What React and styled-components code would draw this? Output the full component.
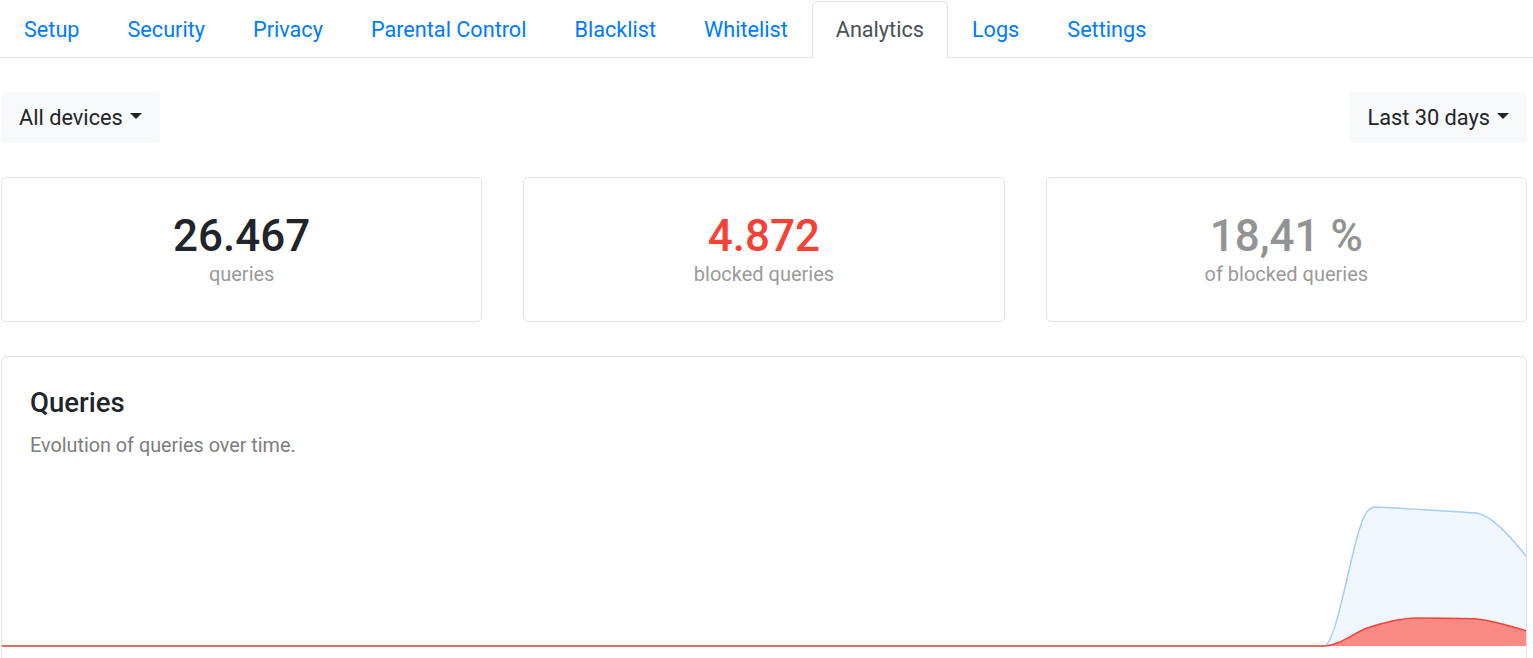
import React from "react";
import styled, { createGlobalStyle } from "styled-components";

const Global = createGlobalStyle`
  html, body { margin: 0; padding: 0; overflow: hidden; background: #fff; }
  body { font-family: Roboto, "Liberation Sans", Arial, sans-serif; color: #212529; }
  * { box-sizing: border-box; }
`;

const Page = styled.div`
  width: 1533px;
`;

const Nav = styled.nav`
  display: flex;
  padding-top: 1px;
  border-bottom: 1px solid #dee2e6;
`;

const Tab = styled.a`
  display: block;
  font-size: 21.65px;
  line-height: 33px;
  padding: 11px 23px;
  border: 1px solid ${(p) => (p.$active ? "#dee2e6" : "transparent")};
  border-bottom-color: ${(p) => (p.$active ? "#fff" : "transparent")};
  border-radius: 5px 5px 0 0;
  margin-bottom: -1px;
  background: ${(p) => (p.$active ? "#fff" : "transparent")};
  color: ${(p) => (p.$active ? "#495057" : "#007bff")};
  text-decoration: none;
  cursor: pointer;
`;

const Content = styled.main`
  padding: 0 6px 0 1px;
`;

const FilterRow = styled.div`
  display: flex;
  justify-content: space-between;
  margin-top: 34px;
`;

const Dropdown = styled.button`
  display: flex;
  align-items: center;
  gap: 7px;
  height: 51px;
  padding: 0 18px;
  border: none;
  border-radius: 5px;
  background: #f8f9fa;
  font-family: inherit;
  font-size: 21.75px;
  color: #212529;
  cursor: pointer;
`;

const Caret = styled.span`
  display: inline-block;
  width: 0;
  height: 0;
  margin-top: -3px;
  border-left: 6.5px solid transparent;
  border-right: 6.5px solid transparent;
  border-top: 6px solid #212529;
`;

const StatGrid = styled.div`
  display: grid;
  grid-template-columns: repeat(3, 1fr);
  gap: 41px;
  margin-top: 34px;
`;

const StatCard = styled.div`
  height: 145px;
  border: 1px solid #dee2e6;
  border-radius: 5px;
  padding-top: 33px;
  text-align: center;
`;

const StatValue = styled.div`
  font-size: 44px;
  font-weight: 500;
  line-height: 51px;
  color: ${(p) => p.$color};
`;

const StatLabel = styled.div`
  font-size: 20px;
  line-height: 24px;
  color: #9a9a9a;
`;

const ChartCard = styled.section`
  margin-top: 34px;
  border: 1px solid #dee2e6;
  border-radius: 5px;
  height: 320px;
`;

const ChartHeader = styled.header`
  padding: 29px 28px 0;
`;

const ChartTitle = styled.h2`
  margin: 0;
  font-size: 27.5px;
  font-weight: 500;
  line-height: 34px;
  color: #212529;
`;

const ChartSub = styled.p`
  margin: 11px 0 0;
  font-size: 19.8px;
  line-height: 30px;
  color: #7d7d7d;
`;

const ChartSvg = styled.svg`
  display: block;
  margin-top: 9px;
  width: 1524px;
  height: 188px;
`;

const tabs = ["Setup", "Security", "Privacy", "Parental Control", "Blacklist", "Whitelist", "Analytics", "Logs", "Settings"];

const stats = [
  { value: "26.467", label: "queries", color: "#212529" },
  { value: "4.872", label: "blocked queries", color: "#f44336" },
  { value: "18,41 %", label: "of blocked queries", color: "#939393" },
];

const bluePath =
  "M 2 646 L 1325 646 C 1335 640, 1345 585, 1355 545 C 1362 518, 1366 507, 1376 507 C 1400 508, 1440 511, 1476 513 C 1490 515, 1505 530, 1527 557";
const redPath =
  "M 2 646 L 1325 646 C 1340 645, 1352 634, 1367 628 C 1385 622, 1400 618, 1417 618 C 1440 618, 1460 618, 1477 619 C 1495 621, 1510 626, 1527 631";

export default function App() {
  return (
    <Page>
      <Global />
      <Nav>
        {tabs.map((t) => (
          <Tab key={t} $active={t === "Analytics"}>
            {t}
          </Tab>
        ))}
      </Nav>
      <Content>
        <FilterRow>
          <Dropdown>
            All devices <Caret />
          </Dropdown>
          <Dropdown>
            Last 30 days <Caret />
          </Dropdown>
        </FilterRow>
        <StatGrid>
          {stats.map((s) => (
            <StatCard key={s.label}>
              <StatValue $color={s.color}>{s.value}</StatValue>
              <StatLabel>{s.label}</StatLabel>
            </StatCard>
          ))}
        </StatGrid>
        <ChartCard>
          <ChartHeader>
            <ChartTitle>Queries</ChartTitle>
            <ChartSub>Evolution of queries over time.</ChartSub>
          </ChartHeader>
          <ChartSvg viewBox="2 470 1524 188" preserveAspectRatio="none">
            <path d={bluePath + " L 1527 646 Z"} fill="#f1f7fe" />
            <path d={bluePath} fill="none" stroke="#a3cefa" strokeWidth="1.5" />
            <path d={redPath + " L 1527 646 Z"} fill="#fa8a84" />
            <path d={redPath} fill="none" stroke="#f5443b" strokeWidth="1.5" />
          </ChartSvg>
        </ChartCard>
      </Content>
    </Page>
  );
}
